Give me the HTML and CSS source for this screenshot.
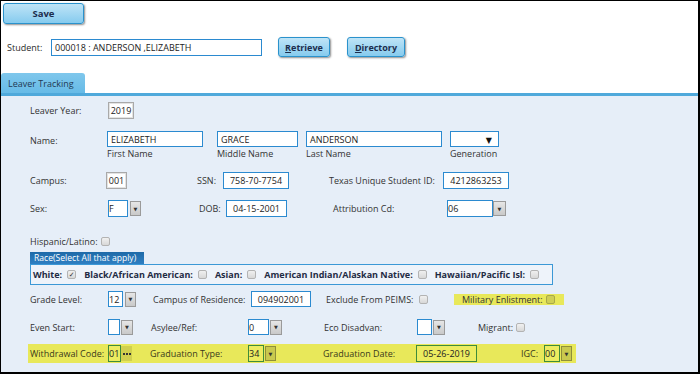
FILE: index.html
```html
<!DOCTYPE html>
<html>
<head>
<meta charset="utf-8">
<link rel="stylesheet" href="styles.css">
</head>
<body>
<div class="frame">
  <div class="top">
    <button class="btn save">Save</button>
    <div class="student-row">
      <span class="student-lbl">Student:</span>
      <span class="inp student-inp">000018 : ANDERSON ,ELIZABETH</span>
      <button class="btn small retrieve"><u>R</u>etrieve</button>
      <button class="btn small directory"><u>D</u>irectory</button>
    </div>
    <div class="tabs"><span class="tab">Leaver Tracking</span></div>
  </div>
  <div class="tabbar"></div>
  <div class="content">
    <div class="row r-year">
      <span class="lbl w78">Leaver Year:</span>
      <span class="inp gray year">2019</span>
    </div>

    <div class="row r-name">
      <span class="lbl w77 name-lbl">Name:</span>
      <div class="ncol first"><span class="inp blue">ELIZABETH</span><span class="sub">First Name</span></div>
      <div class="ncol middle"><span class="inp blue">GRACE</span><span class="sub">Middle Name</span></div>
      <div class="ncol last"><span class="inp blue">ANDERSON</span><span class="sub">Last Name</span></div>
      <div class="ncol gen"><span class="inp blue gensel"><span class="tri">&#9660;</span></span><span class="sub">Generation</span></div>
    </div>

    <div class="row r-campus">
      <span class="lbl w76">Campus:</span>
      <span class="inp gray campus">001</span>
      <span class="lbl ssn-lbl">SSN:</span>
      <span class="inp blue ssn">758-70-7754</span>
      <span class="lbl tx-lbl">Texas Unique Student ID:</span>
      <span class="inp blue tx">4212863253</span>
    </div>

    <div class="row r-sex">
      <span class="lbl w78">Sex:</span>
      <span class="inp blue sex left">F</span><span class="dd sexdd">&#9660;</span>
      <span class="lbl dob-lbl">DOB:</span>
      <span class="inp blue dob">04-15-2001</span>
      <span class="lbl attr-lbl">Attribution Cd:</span>
      <span class="inp blue attr left">06</span><span class="dd attrdd">&#9660;</span>
    </div>

    <div class="row r-hisp">
      <span class="lbl">Hispanic/Latino:</span><span class="cb hisp-cb"></span>
    </div>

    <div class="race">
      <div class="legend">Race(Select All that apply)</div>
      <div class="race-box">
        <span class="rl">White:</span><span class="cb checked">&#10003;</span>
        <span class="rl">Black/African American:</span><span class="cb"></span>
        <span class="rl">Asian:</span><span class="cb"></span>
        <span class="rl">American Indian/Alaskan Native:</span><span class="cb"></span>
        <span class="rl">Hawaiian/Pacific Isl:</span><span class="cb"></span>
      </div>
    </div>

    <div class="row r-grade">
      <span class="lbl w78">Grade Level:</span>
      <span class="inp blue grade left">12</span><span class="dd">&#9660;</span>
      <span class="lbl cor-lbl">Campus of Residence:</span>
      <span class="inp blue cor">094902001</span>
      <span class="lbl peims-lbl">Exclude From PEIMS:</span><span class="cb"></span>
      <span class="mil"><span class="lbl">Military Enlistment:</span><span class="cb ycb"></span></span>
    </div>

    <div class="row r-even">
      <span class="lbl w78">Even Start:</span>
      <span class="inp blue even"></span><span class="dd">&#9660;</span>
      <span class="lbl asy-lbl">Asylee/Ref:</span>
      <span class="inp blue asy left">0</span><span class="dd">&#9660;</span>
      <span class="lbl eco-lbl">Eco Disadvan:</span>
      <span class="inp blue eco"></span><span class="dd">&#9660;</span>
      <span class="lbl mig-lbl">Migrant:</span><span class="cb"></span>
    </div>

    <div class="row r-grad">
      <span class="lbl w78">Withdrawal Code:</span>
      <span class="inp green wd left">01</span><span class="dd ydd dots"><i></i><i></i><i></i></span>
      <span class="lbl gt-lbl">Graduation Type:</span>
      <span class="inp green gt left">34</span><span class="dd ydd">&#9660;</span>
      <span class="lbl gd-lbl">Graduation Date:</span>
      <span class="inp green gd">05-26-2019</span>
      <span class="lbl igc-lbl">IGC:</span>
      <span class="inp green igc left">00</span><span class="dd ydd">&#9660;</span>
    </div>
  </div>
</div>
</body>
</html>
```

FILE: styles.css
```css
* { box-sizing: border-box; }
html, body { margin: 0; padding: 0; }
body {
  width: 700px; height: 374px; overflow: hidden;
  font-family: "Open Sans", "DejaVu Sans", sans-serif;
  font-size: 9px; color: #2b2b2b; background: #fff;
}
.frame {
  width: 700px; height: 374px;
  border-top: 1px solid #000; border-left: 1px solid #000;
  border-right: 2px solid #000; border-bottom: 2px solid #000;
  display: flex; flex-direction: column;
}
.top { background: #fff; padding: 2px 0 0 2px; }
.btn {
  font-family: "Open Sans", "DejaVu Sans", sans-serif;
  font-weight: bold; color: #1c2d4d;
  background: linear-gradient(#bfe4f7, #86cbee);
  border: 1px solid #2a92cc; border-radius: 3px;
  box-shadow: 1px 1px 2px rgba(0,0,0,0.45);
  padding: 0; display: flex; align-items: center; justify-content: center;
}
.save { width: 81px; height: 21px; font-size: 9.5px; }
.btn u { text-decoration: underline; }
.student-row { display: flex; align-items: center; height: 20px; margin-top: 13px; padding-left: 4px; }
.student-lbl { width: 44px; }
.student-inp { width: 211px; height: 17px; border: 1px solid #2b8ad0; padding-left: 3px; justify-content: flex-start !important; }
.small { height: 20px; font-size: 9px; }
.retrieve { width: 52px; margin-left: 16px; }
.directory { width: 58px; margin-left: 17px; }
.tabs { margin-top: 16px; height: 20px; display: flex; margin-left: -2px; }
.tab {
  width: 84px; height: 20px;
  background: linear-gradient(#7fc7ec, #67bbe7);
  border-radius: 3px 3px 0 0;
  padding-left: 7px; display: flex; align-items: center; color: #233a55;
}
.tabbar { height: 3px; background: #4fa9db; }
.content { flex: 1; background: #e6eef8; padding: 6px 0 0 29px; }
.row { display: flex; align-items: center; }
.row > * { flex-shrink: 0; }
.lbl { white-space: nowrap; color: #333; }
.inp {
  display: flex; align-items: center; justify-content: center;
  background: #fff; height: 17px; color: #222; white-space: nowrap;
}
.inp.left { justify-content: flex-start; padding-left: 0; }
.blue { border: 1px solid #2b8ad0; }
.gray { border: 1px solid #a9a9a9; box-shadow: inset 0 0 0 1px #e3e3e3; }
.green { border: 1px solid #3f8c3a; background: #ecec60; }
.w78 { width: 78px; }
.w77 { width: 77px; }
.w76 { width: 76px; }
.year { width: 26px; }

.r-name { margin-top: 12px; align-items: flex-start; }
.name-lbl { margin-top: 3px; }
.ncol { display: flex; flex-direction: column; }
.ncol .inp { height: 16px; justify-content: flex-start; padding-left: 3px; }
.sub { margin-top: 1px; color: #333; line-height: 11px; }
.first { width: 110px; } .first .inp { width: 96px; }
.middle { width: 89px; } .middle .inp { width: 81px; }
.last { width: 144px; } .last .inp { width: 136px; }
.gen .inp { width: 49px; }
.gensel { justify-content: flex-end !important; padding-right: 6px; }
.tri { font-size: 8px; color: #111; }

.r-campus { margin-top: 13px; }
.campus { width: 21px; }
.ssn-lbl { margin-left: 70px; width: 26px; }
.ssn { width: 66px; }
.tx-lbl { margin-left: 40px; width: 114px; }
.tx { width: 66px; }

.r-sex { margin-top: 11px; }
.sex { width: 20px; }
.dd {
  width: 11px; height: 15px; margin-left: 2px;
  background: linear-gradient(#e6e6e6, #c9c9c9); border: 1px solid #9a9a9a;
  font-size: 5px; color: #333; display: flex; align-items: center; justify-content: center;
}
.dob-lbl { margin-left: 58px; width: 27px; }
.dob { width: 61px; }
.attr-lbl { margin-left: 46px; width: 114px; }
.attr { width: 46px; }
.attrdd { width: 13px; margin-left: 0; }

.r-hisp { margin-top: 18px; height: 12px; }
.cb {
  width: 9px; height: 9px; margin-left: 3px; flex-shrink: 0;
  background: linear-gradient(#f0f0f0, #d8d8d8); border: 1px solid #b3b3b3; border-radius: 2px;
  display: inline-flex; align-items: center; justify-content: center; font-size: 7px; color: #333;
}
.race { margin-top: 5px; width: 523px; }
.legend {
  width: 114px; height: 12px; background: linear-gradient(#1e6aa8, #2f7fc2);
  color: #fff; padding-left: 4px; display: flex; align-items: center;
  white-space: nowrap; overflow: hidden; font-size: 8.6px; line-height: 12px;
}
.race-box {
  height: 21px; border: 1px solid #3b98d6; background: #eef3fa;
  display: flex; align-items: center; padding-left: 2px; font-weight: bold; color: #1f2b44;
}
.race-box .rl { white-space: nowrap; flex-shrink: 0; }
.race-box .cb { margin-left: 5px; margin-right: 8px; font-weight: normal; }

.r-grade { margin-top: 6px; }
.grade { width: 15px; height: 16px; }
.cor-lbl { margin-left: 17px; width: 98px; }
.cor { width: 60px; height: 16px; }
.peims-lbl { margin-left: 15px; width: 90px; }
.mil {
  margin-left: 26px; width: 110px; height: 11px; background: #e8e85a;
  display: flex; align-items: center; padding-left: 8px;
}
.ycb { background: #cfcf55; border-color: #a9a948; }

.r-even { margin-top: 12px; }
.even { width: 12px; height: 16px; }
.asy-lbl { margin-left: 18px; width: 97px; }
.asy { width: 21px; height: 16px; }
.eco-lbl { margin-left: 42px; width: 93px; }
.eco { width: 15px; height: 16px; }
.mig-lbl { margin-left: 33px; width: 32px; text-align: right; }
.r-even .cb { margin-left: 6px; }
.r-even .dd { margin-left: 1px; width: 12px; }

.r-grad {
  margin-top: 9px; margin-left: -2px; padding-left: 2px;
  width: 548px; height: 19px; background: #e8e85a;
}
.r-grad .lbl { color: #3a3a1a; }
.wd { width: 13px; }
.ydd { background: #c9c94e; border-color: #8f8f3a; margin-left: 1px; }
.dots { margin-left: 0; border: none; background: #d0d04e; gap: 1px; }
.dots i { display: block; width: 2px; height: 2px; background: #333; }
.gt-lbl { margin-left: 18px; width: 98px; }
.gt { width: 16px; }
.gd-lbl { margin-left: 47px; width: 93px; }
.gd { width: 61px; height: 17px; }
.igc-lbl { margin-left: 44px; width: 23px; }
.igc { width: 16px; }
```
